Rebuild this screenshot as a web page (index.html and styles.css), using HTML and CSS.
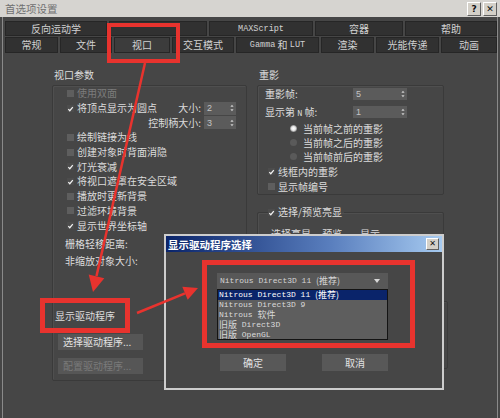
FILE: index.html
```html
<!DOCTYPE html>
<html lang="zh-CN">
<head>
    <meta charset="UTF-8">
    <title>首选项设置</title>
    <link rel="stylesheet" href="styles.css">
</head>
<body>
<div class="win">
    <div class="titlebar">
        <span class="title">首选项设置</span>
        <div class="cap-btns">
            <span class="cap-btn">?</span>
            <span class="cap-btn">✕</span>
        </div>
    </div>

    <div class="frame">
        <!-- 选项卡 -->
        <div class="tabs">
            <div class="tab-row row-top">
                <div class="tab">反向运动学</div>
                <div class="tab"></div>
                <div class="tab mono">MAXScript</div>
                <div class="tab">容器</div>
                <div class="tab">帮助</div>
            </div>
            <div class="tab-row row-bottom">
                <div class="tab">常规</div>
                <div class="tab">文件</div>
                <div class="tab active">视口</div>
                <div class="tab">交互模式</div>
                <div class="tab"><span class="mono">Gamma</span>&nbsp;和&nbsp;<span class="mono">LUT</span></div>
                <div class="tab">渲染</div>
                <div class="tab">光能传递</div>
                <div class="tab">动画</div>
            </div>
        </div>

        <div class="panel">
            <!-- 视口参数 -->
            <div class="col-left">
                <div class="group-title">视口参数</div>
                <div class="group-box vp">
                    <div class="row disabled"><span class="cb"></span>使用双面</div>
                    <div class="row">
                        <span class="cb on"><svg viewBox="0 0 8 8"><path d="M1.5 4.2 L3.2 6 L6.6 1.8"/></svg></span>将顶点显示为圆点
                        <span class="spin-wrap">大小:<span class="spin">2<i class="arr"><svg viewBox="0 0 5 9"><path d="M2.5 0.5 L4.5 3 L0.5 3Z M2.5 8.5 L4.5 6 L0.5 6Z"/></svg></i></span></span>
                    </div>
                    <div class="row">
                        <span class="spin-wrap">控制柄大小:<span class="spin">3<i class="arr"><svg viewBox="0 0 5 9"><path d="M2.5 0.5 L4.5 3 L0.5 3Z M2.5 8.5 L4.5 6 L0.5 6Z"/></svg></i></span></span>
                    </div>
                    <div class="row"><span class="cb"></span>绘制链接为线</div>
                    <div class="row"><span class="cb"></span>创建对象时背面消隐</div>
                    <div class="row"><span class="cb on"><svg viewBox="0 0 8 8"><path d="M1.5 4.2 L3.2 6 L6.6 1.8"/></svg></span>灯光衰减</div>
                    <div class="row"><span class="cb on"><svg viewBox="0 0 8 8"><path d="M1.5 4.2 L3.2 6 L6.6 1.8"/></svg></span>将视口遮罩在安全区域</div>
                    <div class="row"><span class="cb"></span>播放时更新背景</div>
                    <div class="row"><span class="cb"></span>过滤环境背景</div>
                    <div class="row"><span class="cb on"><svg viewBox="0 0 8 8"><path d="M1.5 4.2 L3.2 6 L6.6 1.8"/></svg></span>显示世界坐标轴</div>
                    <div class="row label first-label">栅格轻移距离:</div>
                    <div class="row label">非缩放对象大小:</div>

                    <div class="row driver-title">显示驱动程序</div>
                    <button class="btn first-btn">选择驱动程序...</button>
                    <button class="btn off">配置驱动程序...</button>
                </div>
            </div>

            <!-- 重影 -->
            <div class="col-right">
                <div class="group-title">重影</div>
                <div class="group-box ghost">
                    <div class="field-row"><span class="lbl">重影帧:</span><span class="spin wide">5<i class="arr"><svg viewBox="0 0 5 9"><path d="M2.5 0.5 L4.5 3 L0.5 3Z M2.5 8.5 L4.5 6 L0.5 6Z"/></svg></i></span></div>
                    <div class="field-row second"><span class="lbl">显示第 <span class="mono">N</span> 帧:</span><span class="spin wide">1<i class="arr"><svg viewBox="0 0 5 9"><path d="M2.5 0.5 L4.5 3 L0.5 3Z M2.5 8.5 L4.5 6 L0.5 6Z"/></svg></i></span></div>
                    <div class="radio-row first"><span class="rb on"></span>当前帧之前的重影</div>
                    <div class="radio-row"><span class="rb"></span>当前帧之后的重影</div>
                    <div class="radio-row"><span class="rb"></span>当前帧前后的重影</div>
                    <div class="check-row first"><span class="cb on"><svg viewBox="0 0 8 8"><path d="M1.5 4.2 L3.2 6 L6.6 1.8"/></svg></span>线框内的重影</div>
                    <div class="check-row"><span class="cb"></span>显示帧编号</div>
                </div>

                <fieldset class="group-box hilite">
                    <legend><span class="cb on"><svg viewBox="0 0 8 8"><path d="M1.5 4.2 L3.2 6 L6.6 1.8"/></svg></span>选择/预览亮显</legend>
                    <div class="check-row sub">选择亮显&nbsp;&nbsp;&nbsp;&nbsp;&nbsp;预览&nbsp;&nbsp;&nbsp;&nbsp;&nbsp;&nbsp;&nbsp;&nbsp;显示</div>
                </fieldset>
                <div class="group-box extra"></div>
            </div>
        </div>
    </div>

    <!-- 显示驱动程序选择 对话框 -->
    <div class="dialog">
        <div class="dlg-title">
            <span>显示驱动程序选择</span>
            <span class="cap-btn small">✕</span>
        </div>
        <div class="dlg-body">
            <div class="combo">
                <div class="combo-head"><span>Nitrous Direct3D 11 <span class="cjk">(推荐)</span></span><svg class="drop" viewBox="0 0 6 4"><path d="M0 0 L6 0 L3 4Z"/></svg></div>
                <ul class="combo-list">
                    <li class="sel">Nitrous Direct3D 11 <span class="cjk">(推荐)</span></li>
                    <li>Nitrous Direct3D 9</li>
                    <li>Nitrous <span class="cjk">软件</span></li>
                    <li><span class="cjk">旧版</span> Direct3D</li>
                    <li><span class="cjk">旧版</span> OpenGL</li>
                </ul>
            </div>
            <div class="dlg-btns">
                <button class="btn dlg">确定</button>
                <button class="btn dlg">取消</button>
            </div>
        </div>
    </div>

    <!-- 标注: 红框和箭头 -->
    <svg class="marks" width="500" height="418" viewBox="0 0 500 418">
        <g fill="none" stroke="#e8332e">
            <rect x="109" y="25" width="69" height="36" stroke-width="4"/>
            <rect x="42.5" y="300.5" width="85" height="30" stroke-width="5"/>
            <rect x="204.5" y="262.5" width="208" height="83" stroke-width="5"/>
            <line x1="145" y1="63" x2="96.5" y2="276" stroke-width="2.5"/>
            <line x1="137" y1="313" x2="185" y2="293.3" stroke-width="2.5"/>
        </g>
        <g fill="#e8332e">
            <polygon points="93,292 104.3,278.2 88.7,274.6"/>
            <polygon points="198,288 187.7,299.8 182.3,286.8"/>
        </g>
    </svg>
</div>
</body>
</html>
```

FILE: styles.css
```css
body {
    margin: 0;
    padding: 0;
    background-color: #464646;
    font-family: "Noto Sans CJK SC", "Liberation Sans", sans-serif;
    font-size: 10px;
    color: #dcdcdc;
}

.win {
    position: relative;
    width: 500px;
    height: 418px;
    overflow: hidden;
}

.mono {
    font-family: "Liberation Mono", "Noto Sans CJK SC", monospace;
    font-size: 8.5px;
}

/* 标题栏 */
.titlebar {
    height: 17px;
    background-color: #d6d4d0;
    display: flex;
    align-items: center;
    justify-content: space-between;
    padding: 0 3px 0 5px;
}

.title {
    font-size: 10.5px;
    line-height: 17px;
    color: #707070;
}

.cap-btns {
    display: flex;
    gap: 2px;
}

.cap-btn {
    width: 12px;
    height: 12px;
    background-color: #d4d0c8;
    border: 1px solid;
    border-color: #fff #606060 #606060 #fff;
    color: #111;
    font-family: "DejaVu Sans", sans-serif;
    font-weight: bold;
    font-size: 9px;
    line-height: 12px;
    text-align: center;
}

/* 主体框 */
.frame {
    margin: 0 2px;
    border-left: 1px solid #8a8a8a;
    border-right: 1px solid #8a8a8a;
    height: 401px;
}

.tabs {
    padding: 4px 0 0 2px;
}

.tab-row {
    display: grid;
    gap: 2px;
    width: 492px;
}

.row-top {
    grid-template-columns: 102px 98px 104px 88px 92px;
    height: 15px;
    margin-bottom: 1px;
}

.row-bottom {
    grid-template-columns: 53px 52px 56px 62px 83px 53px 63px 56px;
    height: 16px;
}

.tab {
    background-color: #313131;
    border: 1px solid #262626;
    box-sizing: border-box;
    display: flex;
    align-items: center;
    justify-content: center;
    color: #d2d2d2;
    line-height: 12px;
}

.tab.active {
    background-color: #3c3c3c;
}

/* 参数面板 */
.panel {
    display: flex;
    padding: 15px 0 0 49px;
}

.col-left {
    width: 195px;
}

.col-right {
    width: 187px;
    margin-left: 10px;
}

.group-title {
    height: 17px;
    line-height: 14px;
    padding-left: 2px;
}

.group-box {
    border: 1px solid #3a3a3a;
    box-shadow: inset 1px 1px 0 #4f4f4f;
    border-radius: 2px;
}

.vp {
    height: 294px;
    padding-left: 14px;
}

.row {
    height: 14.7px;
    display: flex;
    align-items: center;
    line-height: 12px;
    white-space: nowrap;
}

.row.disabled {
    color: #7c7c7c;
}

.cb {
    width: 7px;
    height: 7px;
    background-color: #5e5e5e;
    margin-right: 3px;
    flex-shrink: 0;
    display: inline-flex;
}

.cb svg {
    width: 8px;
    height: 8px;
    fill: none;
    stroke: #f2f2f2;
    stroke-width: 1.4;
}

.cb.on {
    background-color: #4c4c4c;
}

.spin-wrap {
    margin-left: auto;
    margin-right: 10px;
    display: flex;
    align-items: center;
    gap: 3px;
}

.spin {
    width: 32px;
    height: 13px;
    background-color: #5b5b5b;
    box-sizing: border-box;
    padding: 0 2px 0 3px;
    display: flex;
    align-items: center;
    justify-content: space-between;
    color: #c4c4c4;
    font-size: 9px;
    font-family: "Liberation Sans", sans-serif;
}

.spin.wide {
    width: 54px;
    height: 12px;
}

.arr {
    display: flex;
}

.arr svg {
    width: 4px;
    height: 8px;
    fill: #cfcfcf;
}

.row.label {
    margin-left: -2px;
}

.row.first-label {
    margin-top: 4px;
}

.row.label + .row.label {
    margin-top: 2px;
}

.row.driver-title {
    margin: 40px 0 0 -12px;
}

.btn {
    display: block;
    width: 85px;
    height: 16px;
    margin: 8px 0 0 -9px;
    padding: 0 0 0 5px;
    border: none;
    background-color: #565656;
    color: #e2e2e2;
    font-family: "Noto Sans CJK SC", sans-serif;
    font-size: 10px;
    line-height: 16px;
    text-align: left;
}

.btn.first-btn {
    margin-top: 11px;
}

.btn.off {
    color: #7a7a7a;
}

/* 重影组 */
.ghost {
    height: 108px;
    padding-left: 7px;
}

.field-row {
    height: 13px;
    display: flex;
    align-items: center;
    margin-top: 1px;
}

.field-row.second {
    margin-top: 5px;
}

.lbl {
    width: 88px;
}

.radio-row {
    height: 14px;
    display: flex;
    align-items: center;
    padding-left: 25px;
}

.radio-row.first {
    margin-top: 3px;
}

.rb {
    width: 7px;
    height: 7px;
    border-radius: 50%;
    background-color: #5a5a5a;
    margin-right: 6px;
}

.rb.on {
    background: radial-gradient(circle, #ffffff 0, #e8e8e8 40%, #7a7a7a 75%);
}

.check-row {
    height: 14px;
    display: flex;
    align-items: center;
    padding-left: 3px;
    white-space: nowrap;
}

.check-row.first {
    margin-top: 1px;
}

.check-row + .check-row {
    margin-top: 1px;
}

.hilite {
    margin: 10px 0 0;
    padding: 0 0 0 10px;
    height: 88px;
    box-sizing: border-box;
}

.hilite legend {
    display: flex;
    align-items: center;
    padding: 0 2px 0 0;
    margin-left: 0;
    line-height: 14px;
}

.check-row.sub {
    margin-top: 7px;
}

.extra {
    height: 66px;
    margin: 8px -4px 0 0;
}

/* 对话框 */
.dialog {
    position: absolute;
    left: 164px;
    top: 234px;
    width: 280px;
    height: 156px;
    box-sizing: border-box;
    border: 2px solid #cdcdcd;
    background-color: #464646;
}

.dlg-title {
    height: 16px;
    background: linear-gradient(to right, #0a246a, #5a7fbe 60%, #a6caf0);
    display: flex;
    align-items: center;
    justify-content: space-between;
    padding: 0 3px 0 2px;
    color: #fff;
    font-weight: bold;
    font-size: 10.5px;
}

.cap-btn.small {
    width: 11px;
    height: 10px;
    line-height: 10px;
    font-size: 8px;
}

.dlg-body {
    padding: 21px 0 0 51px;
}

.combo {
    width: 171px;
}

.combo-head {
    height: 16px;
    background-color: #585858;
    display: flex;
    align-items: center;
    justify-content: space-between;
    padding: 0 8px 0 3px;
    font-family: "Liberation Mono", "Noto Sans CJK SC", monospace;
    font-size: 8px;
    line-height: 10px;
    color: #d4d4d4;
}

.drop {
    width: 6px;
    height: 4px;
    fill: #d8d8d8;
}

.combo-list {
    list-style: none;
    margin: 0;
    padding: 0;
    height: 51px;
    box-sizing: border-box;
    background-color: #5e5e5e;
    border: 1px solid #141414;
    font-family: "Liberation Mono", "Noto Sans CJK SC", monospace;
    font-size: 8px;
    color: #dadada;
}

.combo-list li {
    height: 10px;
    line-height: 10px;
    padding-left: 1px;
    white-space: nowrap;
}

.combo-list li.sel {
    background-color: #0a246a;
    color: #fff;
}

.cjk {
    display: inline-block;
    height: 10px;
    vertical-align: top;
    font-family: "Noto Sans CJK SC", sans-serif;
    font-size: 9px;
    line-height: 10px;
}

.dlg-btns {
    display: flex;
    gap: 36px;
    margin: 14px 0 0 3px;
}

.btn.dlg {
    width: 66px;
    height: 17px;
    margin: 0;
    padding: 0;
    text-align: center;
    background-color: #585858;
}

.marks {
    position: absolute;
    left: 0;
    top: 0;
    pointer-events: none;
}
```
